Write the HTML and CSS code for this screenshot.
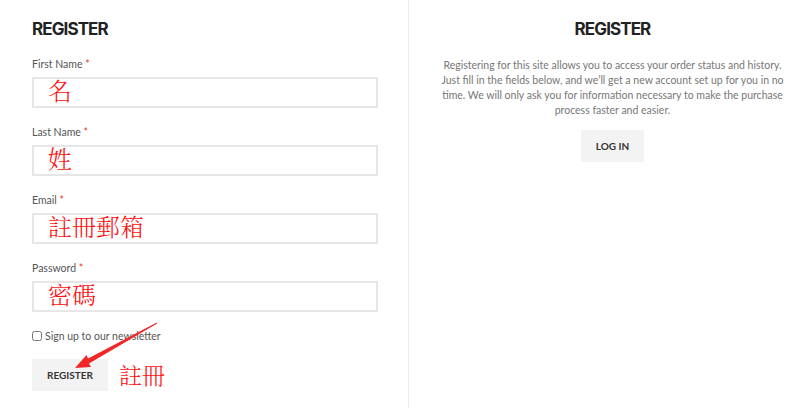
FILE: index.html
```html
<!DOCTYPE html>
<html lang="en">
<head>
  <meta charset="UTF-8" />
  <meta name="viewport" content="width=device-width, initial-scale=1.0"/>
  <title>Register</title>
  <link rel="stylesheet" href="styles.css">
</head>
<body>
  <div class="page">
    <div class="col col-form">
      <h2 class="title">REGISTER</h2>

      <form class="register-form">
        <div class="field">
          <label for="first-name">First Name <span class="req">*</span></label>
          <input type="text" id="first-name" value="名"/>
        </div>
        <div class="field">
          <label for="last-name">Last Name <span class="req">*</span></label>
          <input type="text" id="last-name" value="姓"/>
        </div>
        <div class="field">
          <label for="email">Email <span class="req">*</span></label>
          <input type="text" id="email" value="註冊郵箱"/>
        </div>
        <div class="field">
          <label for="password">Password <span class="req">*</span></label>
          <input type="text" id="password" value="密碼"/>
        </div>

        <label class="check">
          <input type="checkbox"/>
          <span>Sign up to our newsletter</span>
        </label>

        <div class="actions">
          <button type="button" class="btn">REGISTER</button>
          <span class="note">註冊</span>
        </div>
      </form>
    </div>

    <div class="col col-info">
      <h2 class="title">REGISTER</h2>
      <p class="info">Registering for this site allows you to access your order status and history. Just fill in the fields below, and we’ll get a new account set up for you in no time. We will only ask you for information necessary to make the purchase process faster and easier.</p>
      <button type="button" class="btn">LOG IN</button>
    </div>

    <!-- red annotation arrow pointing at the register button -->
    <svg class="arrow" width="800" height="408" viewBox="0 0 800 408">
      <polygon fill="#f0282a" points="156.8,322.6 157.2,323.4 89,363.5 91,367 75,368 86.5,355 88,358.5"/>
    </svg>
  </div>
</body>
</html>
```

FILE: styles.css
```css
body {
  margin: 0;
  background: #fff;
  font-family: Lato, "Liberation Sans", sans-serif;
  color: #555;
}
.page {
  position: relative;
  display: flex;
  width: 800px;
  height: 408px;
  overflow: hidden;
}
.col {
  box-sizing: border-box;
}
.col-form {
  width: 409px;
  padding: 18px 31px 0 32px;
  border-right: 1px solid #ebebeb;
}
.col-info {
  flex: 1;
  padding: 18px 16px 0 32px;
  text-align: center;
}
.title {
  margin: 0;
  font-family: Inter, "Open Sans", sans-serif;
  font-weight: 700;
  font-size: 17px;
  line-height: 22px;
  letter-spacing: -0.9px;
  color: #222;
}
.register-form {
  margin-top: 16px;
}
.field {
  margin-bottom: 16px;
}
.field label {
  display: block;
  font-size: 10.5px;
  line-height: 16px;
  margin-bottom: 5px;
  color: #555;
}
.req {
  color: #e2401c;
}
.field input {
  display: block;
  box-sizing: border-box;
  width: 346px;
  height: 31px;
  margin: 0;
  padding: 0 0 6px 14px;
  border: 2px solid #e6e6e6;
  font-family: "Noto Serif CJK TC", "Noto Sans CJK TC", serif;
  font-weight: 300;
  font-size: 24px;
  color: #ff1010;
  outline: none;
}
.check {
  display: flex;
  align-items: center;
  gap: 3px;
  font-size: 10.5px;
  line-height: 16px;
  margin-top: 14px;
  color: #555;
}
.check input {
  width: 10px;
  height: 10px;
  margin: 0;
}
.actions {
  display: flex;
  align-items: center;
  gap: 11px;
  margin-top: 14px;
}
.btn {
  height: 32px;
  padding: 0 15px;
  border: none;
  background: #f3f3f3;
  font-family: Lato, "Liberation Sans", sans-serif;
  font-weight: 700;
  font-size: 10px;
  color: #333;
  cursor: pointer;
}
.note {
  font-family: "Noto Serif CJK TC", "Noto Sans CJK TC", serif;
  font-weight: 300;
  font-size: 23px;
  color: #ff1010;
}
.info {
  margin: 18px 0 12px;
  font-size: 10.5px;
  line-height: 15px;
  color: #777;
}
.arrow {
  position: absolute;
  left: 0;
  top: 0;
  pointer-events: none;
}
```
